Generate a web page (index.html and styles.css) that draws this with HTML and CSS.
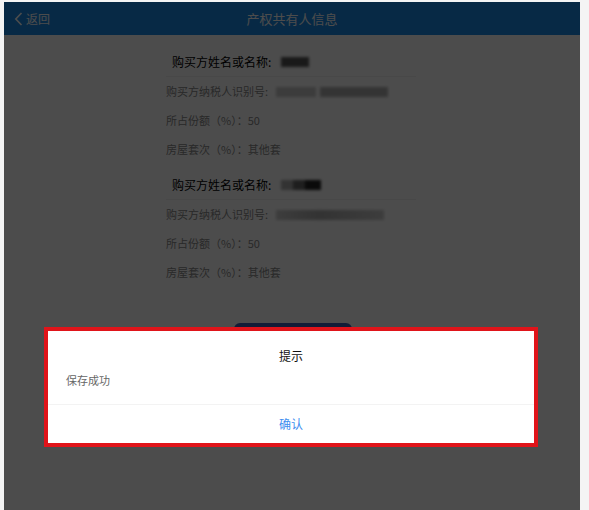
FILE: index.html
```html
<!DOCTYPE html>
<html lang="zh-CN">
<head>
<meta charset="utf-8">
<link rel="stylesheet" href="styles.css">
</head>
<body>
<div class="app">
  <header class="topbar">
    <div class="back">
      <svg class="back-icon" width="9" height="14" viewBox="0 0 9 14"><path d="M7.5 1 L1.8 7 L7.5 13" fill="none" stroke="#fff" stroke-width="1.6"/></svg>
      <span>返回</span>
    </div>
    <div class="title">产权共有人信息</div>
  </header>
  <main class="content">
    <section class="group">
      <div class="g-title">购买方姓名或名称:<span class="blur b-name"></span></div>
      <div class="row">购买方纳税人识别号:<span class="blur b-id1"></span><span class="blur b-id2"></span></div>
      <div class="row">所占份额（%）：50</div>
      <div class="row">房屋套次（%）：其他套</div>
    </section>
    <section class="group">
      <div class="g-title">购买方姓名或名称:<span class="blur b-name2"></span></div>
      <div class="row">购买方纳税人识别号:<span class="blur b-id3"></span></div>
      <div class="row">所占份额（%）：50</div>
      <div class="row">房屋套次（%）：其他套</div>
    </section>
    <div class="actions"><div class="save"></div></div>
  </main>
  <div class="mask"></div>
  <div class="dialog">
    <div class="d-title">提示</div>
    <div class="d-msg">保存成功</div>
    <div class="d-foot">确认</div>
  </div>
</div>
</body>
</html>
```
FILE: styles.css
```css
html, body {
  margin: 0;
  padding: 0;
  background: #f4f4f4;
  font-family: "Noto Sans CJK SC", "Noto Sans", sans-serif;
}
body {
  padding: 2px 9px 0 4px;
  height: 508px;
  overflow: hidden;
}
.app {
  position: relative;
  width: 576px;
  height: 508px;
  background: #fff;
  overflow: hidden;
}
.topbar {
  height: 33px;
  background: #1a8be8;
  color: #fff;
  display: flex;
  align-items: center;
  justify-content: center;
  position: relative;
}
.back {
  position: absolute;
  left: 10px;
  top: 0;
  height: 33px;
  display: flex;
  align-items: center;
  gap: 3px;
  font-size: 12px;
}
.title {
  font-size: 13px;
}
.content {
  padding: 12px 0 0 162px;
}
.group {
  margin-bottom: 6px;
}
.g-title {
  height: 30px;
  line-height: 30px;
  font-size: 12px;
  color: #000;
  padding-left: 6px;
  display: flex;
  align-items: center;
  border-bottom: 1px solid #f2f2f2;
  width: 250px;
  box-sizing: border-box;
}
.row {
  height: 29px;
  line-height: 29px;
  font-size: 11px;
  color: #8a8a8a;
  display: flex;
  align-items: center;
}
.blur {
  display: inline-block;
  height: 10px;
  filter: blur(1.5px);
}
.b-name { width: 28px; margin-left: 10px; background: #555; }
.b-name2 { width: 40px; margin-left: 10px; background: linear-gradient(90deg, #aaa 0 30%, #666 30% 60%, #222 60%); }
.b-id1 { width: 40px; margin-left: 8px; background: #c8c8c8; }
.b-id2 { width: 68px; margin-left: 4px; background: #b0b0b0; }
.b-id3 { width: 108px; margin-left: 8px; background: linear-gradient(90deg, #ccc, #aaa 40%, #bbb 70%, #ccc); }
.actions {
  padding: 30px 0 0 68px;
}
.save {
  width: 118px;
  height: 36px;
  border-radius: 6px;
  background: #3d5fb8;
}
.mask {
  position: absolute;
  inset: 0;
  background: rgba(0, 0, 0, 0.7);
}
.dialog {
  position: absolute;
  left: 40px;
  top: 325px;
  width: 486px;
  border: 4px solid #e0141a;
  background: #fff;
  display: flex;
  flex-direction: column;
}
.d-title {
  text-align: center;
  font-size: 12px;
  color: #111;
  padding-top: 16px;
  line-height: 18px;
}
.d-msg {
  font-size: 11px;
  color: #666;
  padding: 7px 18px 0;
  line-height: 16px;
  height: 40px;
  box-sizing: border-box;
  border-bottom: 1px solid #f3f3f3;
}
.d-foot {
  height: 38px;
  line-height: 38px;
  text-align: center;
  font-size: 12px;
  color: #3d8df0;
}
```
